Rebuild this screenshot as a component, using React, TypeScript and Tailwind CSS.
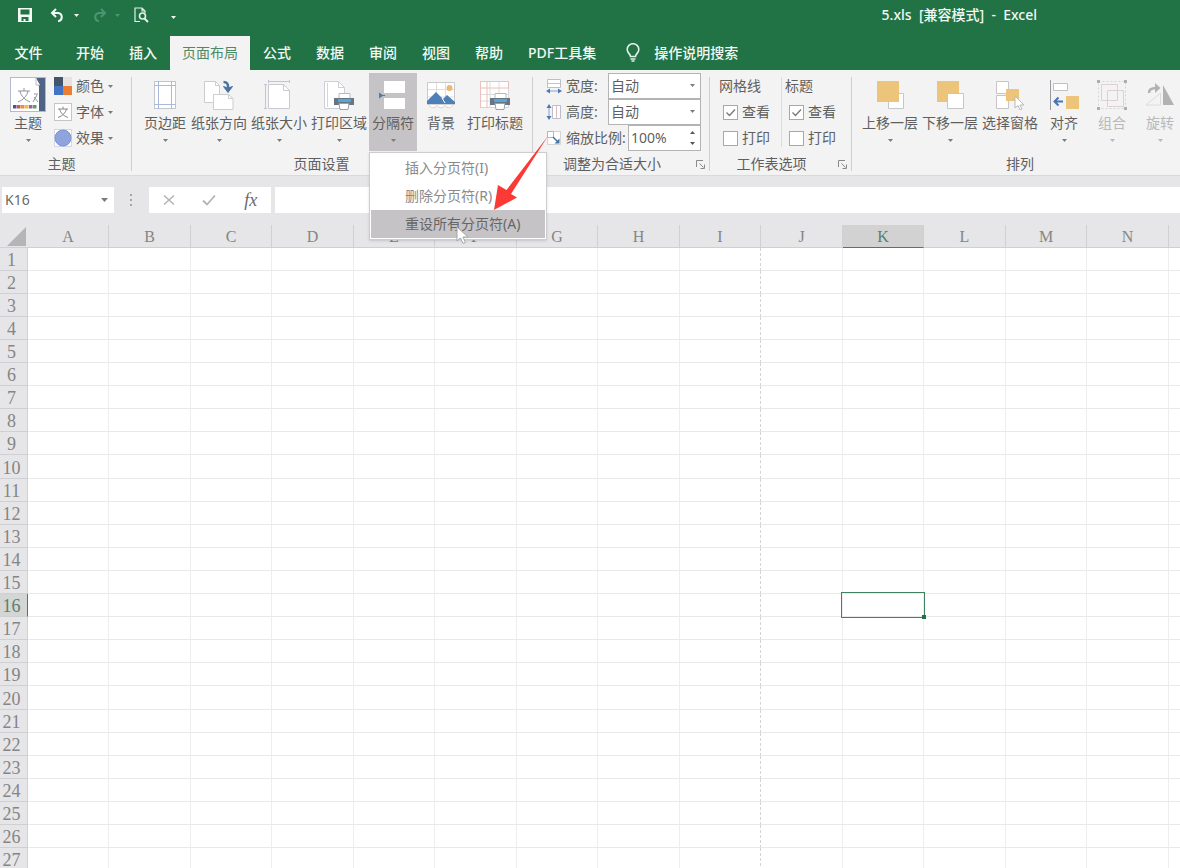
import { useState } from "react";
import type { ReactNode } from "react";

const COLUMNS = "ABCDEFGHIJKLMN".split("");
const ROWS = Array.from({ length: 28 }, (_, i) => i + 1);
const PAGE_BREAK_AFTER = "I";

/* ---------- Icons ---------- */

function Caret({ className = "" }: { className?: string }) {
  return (
    <svg viewBox="0 0 5 3" className={`w-[5px] h-[3px] ${className}`} fill="currentColor">
      <path d="M0 0h5L2.5 3z" />
    </svg>
  );
}

function IconSave() {
  return (
    <svg viewBox="0 0 14 14" className="w-3.5 h-3.5">
      <path fill="#f3faf5" fillRule="evenodd" d="M0 0h14v14H0zM2.5 1.5v5h9v-5zM3.5 9v4h2v-2h2v2h3V9z" />
    </svg>
  );
}

function IconUndo({ className = "" }: { className?: string }) {
  return (
    <svg viewBox="0 0 16 14" className={`w-4 h-3.5 ${className}`} fill="none" stroke="currentColor" strokeWidth="2">
      <path d="M6 1 2 5l4 4M2 5h6.500a4.200 4.200 0 0 1 0 8.200H8" />
    </svg>
  );
}

function IconPreview() {
  return (
    <svg viewBox="0 0 15 16" className="w-[15px] h-4" fill="none" stroke="#e4f1e8" strokeWidth="1.2">
      <path d="M6 14.500H1V1h7l3 3v2M8 1v3h3" />
      <circle cx="8.500" cy="9" r="3" strokeWidth="1.600" />
      <path d="m10.500 11.500 3.500 3.500" strokeWidth="2" />
    </svg>
  );
}

function IconBulb() {
  return (
    <svg viewBox="0 0 14 20" className="w-3.5 h-5" fill="none" stroke="#e4f1e8" strokeWidth="1.600">
      <path d="M4.500 13.500c0-2.500-3.300-3.500-3.300-7a5.800 5.800 0 0 1 11.600 0c0 3.500-3.300 4.500-3.300 7z" />
      <path d="M4.500 16h5M5.500 18h3" />
    </svg>
  );
}

function IconThemes() {
  return (
    <svg viewBox="0 0 36 36" className="w-9 h-9">
      <rect x=".5" y=".5" width="35" height="34" fill="#fff" stroke="#b5b8cc" />
      <path d="M26 1h9v33h-6V10z" fill="#4f6484" />
      <path d="M26 1v7h4" fill="#fff" stroke="#b9bcc8" />
      <path d="M8 14h12M14 11v3M18 14c-1 5-5 9-10 11M10 14c1 5 5 9 10 11" stroke="#8d92a0" fill="none" />
      <path d="M24 17h4M27 18l-4 7M24 20l4 5" stroke="#8d92a0" fill="none" />
      <path d="M3 28h3.500v3.500H3z" fill="#4455a5" />
      <path d="M7 28h3.500v3.500H7z" fill="#d9534a" />
      <path d="M11 28h3.500v3.500H11z" fill="#e88f30" />
      <path d="M15 28h3.500v3.500H15z" fill="#e5c043" />
      <path d="M19 28h3.500v3.500H19z" fill="#8a68b4" />
      <path d="M23 28h3.500v3.500H23z" fill="#62a052" />
    </svg>
  );
}

function IconColors() {
  return (
    <svg viewBox="0 0 18 18" className="w-[18px] h-[18px]">
      <path d="M0 0h9v9H0z" fill="#44546a" />
      <path d="M9 0h9v9H9z" fill="#e4e2e2" />
      <path d="M0 9h9v9H0z" fill="#4472c4" />
      <path d="M9 9h9v9H9z" fill="#ed7d31" />
    </svg>
  );
}

function IconFonts() {
  return (
    <svg viewBox="0 0 18 18" className="w-[18px] h-[18px]" fill="none">
      <rect x=".5" y=".5" width="17" height="17" fill="#fff" stroke="#c6c6c6" />
      <path d="M4 6h10M9 3.500V6M12.500 6c-1 4-4 7-8.500 8.500M5.500 6c1 4 4 7 8.500 8.500" stroke="#8a8a8a" />
    </svg>
  );
}

function IconEffects() {
  return (
    <svg viewBox="0 0 18 18" className="w-[18px] h-[18px]">
      <rect x=".5" y=".5" width="17" height="17" fill="#fff" stroke="#d3d6e6" />
      <circle cx="9" cy="9" r="8" fill="#8fa3dc" stroke="#7c92d2" />
    </svg>
  );
}

function IconMargins() {
  return (
    <svg viewBox="0 0 30 30" className="w-[30px] h-[30px]" fill="none">
      <rect x="4.500" y="1.500" width="21" height="27" fill="#fff" stroke="#c4c6ce" />
      <path d="M8.500 1v28M21.500 1v28M4 5.500h22M4 24.500h22" stroke="#a9b9dd" />
    </svg>
  );
}

function IconOrientation() {
  return (
    <svg viewBox="0 0 30 30" className="w-[30px] h-[30px]" fill="none">
      <path d="M.5 1.500h11l4 4v17H.5z" fill="#fff" stroke="#cdcdd1" />
      <path d="M11.500 1.500v4h4" stroke="#cdcdd1" />
      <path d="M9.500 14.500h15l4.500 4v11H9.500z" fill="#fff" stroke="#cdcdd1" />
      <path d="M24.500 14.500v4H29" stroke="#cdcdd1" />
      <path d="M19.500 2c3.500 0 5 2 4.500 6" stroke="#47759f" strokeWidth="2.500" />
      <path d="M19.500 6.500 24 8l4.500-1.500L24 12.500z" fill="#47759f" stroke="#47759f" />
    </svg>
  );
}

function IconSize() {
  return (
    <svg viewBox="0 0 30 30" className="w-[30px] h-[30px]" fill="none">
      <path d="M4.500 4.500h15l6 6v18h-21z" fill="#fff" stroke="#c8cad0" />
      <path d="M19.500 4.500v6h6" stroke="#c8cad0" />
      <path d="M4 1.500h22M1.500 4v25M4.500 0v3M25.500 0v3M0 4.500h3M0 28.500h3" stroke="#bfc5d3" />
    </svg>
  );
}

function Printer() {
  return (
    <g>
      <path d="M15 13.500h11v5H15z" fill="#fff" stroke="#b4bac4" />
      <path d="M10 18h20v7H10z" fill="#6b7482" />
      <path d="M14 19h13v3H14z" fill="#4fa9d4" />
      <path d="M15 23.500h10l-1 6h-8z" fill="#fff" stroke="#9aa1ab" />
    </g>
  );
}

function IconPrintArea() {
  return (
    <svg viewBox="0 0 30 30" className="w-[30px] h-[30px]" fill="none">
      <path d="M.5 1.500h14l6 6v21H.5z" fill="#fff" stroke="#cdcfd8" />
      <path d="M14.500 1.500v6h6" stroke="#cdcfd8" />
      <path d="M3.500 3v24" stroke="#cfd6ea" />
      <Printer />
    </svg>
  );
}

function IconBreaks() {
  return (
    <svg viewBox="0 0 30 30" className="w-[30px] h-[30px]">
      <path d="M6 1h21v12H6zM6 18h21v11H6z" fill="#fff" />
      <path d="M1 12.500 5.500 15.500 1 18.500z" fill="#4b7dac" />
      <path d="M5 15.500h2" stroke="#4b7dac" />
    </svg>
  );
}

function IconBackground() {
  return (
    <svg viewBox="0 0 30 30" className="w-[30px] h-[30px]" fill="none">
      <path d="M1.500 2.500h27v22h-27z" fill="#fff" stroke="#c9c9c9" />
      <path d="M10.500 3v21M19.500 3v21M2 9.500h26M2 17h26" stroke="#e0dede" />
      <circle cx="23.500" cy="8" r="3" fill="#e9b975" />
      <path d="M1 24v-3l9-9 7 7 4-4 8 7v2z" fill="#4d80b9" />
      <path d="m16 18 3 5" stroke="#fff" />
      <path d="M3 24.500h24c-1 4-6 4-8 1-2 3-6 3-8 0-2 3-7 3-8-1z" fill="#fff" stroke="#d2d2d2" />
    </svg>
  );
}

function IconPrintTitles() {
  return (
    <svg viewBox="0 0 30 30" className="w-[30px] h-[30px]" fill="none">
      <path d="M.5 1.500h28v26H.5z" fill="#fff" stroke="#d8d6d9" />
      <path d="M10 2v25M19 2v25M1 14.500h28M1 21h28" stroke="#dedcde" />
      <path d="M.5 28V1.500h28V8H.5M7 2v26" stroke="#ecc0bc" />
      <Printer />
    </svg>
  );
}

function IconFitWidth() {
  return (
    <svg viewBox="0 0 16 16" className="w-4 h-4" fill="none">
      <path d="M1.500 1.500h13v8h-13z" fill="#fff" stroke="#b9bfcb" />
      <path d="M2 5.500h12" stroke="#e2b8b8" />
      <path d="M3 13h10" stroke="#86a3cf" />
      <path d="M0 13l4-2.500v5zM16 13l-4-2.500v5z" fill="#4f76b4" />
    </svg>
  );
}

function IconFitHeight() {
  return (
    <svg viewBox="0 0 16 16" className="w-4 h-4" fill="none">
      <path d="M6.500 1.500h8v13h-8z" fill="#fff" stroke="#b9bfcb" />
      <path d="M10.500 2v12" stroke="#e2b8b8" />
      <path d="M3 3v10" stroke="#86a3cf" />
      <path d="M3 0 .5 4h5zM3 16l-2.500-4h5z" fill="#4f76b4" />
    </svg>
  );
}

function IconScale() {
  return (
    <svg viewBox="0 0 16 16" className="w-4 h-4" fill="none">
      <path d="M1.500 1.500h13v13h-13z" fill="#fff" stroke="#d4d4d4" />
      <path d="M1.500 1.500h6v6h-6z" stroke="#dda6a6" />
      <path d="m7 7 5 5" stroke="#4373a8" strokeWidth="1.500" />
      <path d="M13.500 13.500v-5l-5 5z" fill="#4373a8" />
    </svg>
  );
}

function IconBringForward() {
  return (
    <svg viewBox="0 0 30 30" className="w-[30px] h-[30px]">
      <path d="M13.500 13.500h15v15h-15z" fill="#fff" stroke="#c6c6ca" />
      <path d="M2 1h22v21H2z" fill="#ecc47a" />
    </svg>
  );
}

function IconSendBackward() {
  return (
    <svg viewBox="0 0 30 30" className="w-[30px] h-[30px]">
      <path d="M2 1h22v21H2z" fill="#ecc47a" />
      <path d="M12.500 13.500h16v15h-16z" fill="#fff" stroke="#c6c6ca" />
    </svg>
  );
}

function IconSelectionPane() {
  return (
    <svg viewBox="0 0 30 30" className="w-[30px] h-[30px]">
      <path d="M1.500 1.500h12v12h-12zM1.500 15.500h12v13h-12z" fill="#fff" stroke="#c6c6ca" />
      <path d="M11 9h13v12H11z" fill="#ecc47a" />
      <path d="M20 16v12l3-2.500 2 4.500 2-1-2-4h4z" fill="#fff" stroke="#b8b8be" />
    </svg>
  );
}

function IconAlign() {
  return (
    <svg viewBox="0 0 30 30" className="w-[30px] h-[30px]" fill="none">
      <path d="M1.500 0v30" stroke="#9a9aa0" />
      <path d="M4.500 3.500h14v7h-14z" fill="#fff" stroke="#c0c0c4" />
      <path d="M17 16h13v13H17z" fill="#ecc47a" />
      <path d="M14 21.500H6M9.500 17.500l-4 4 4 4" stroke="#4774b3" strokeWidth="2" />
    </svg>
  );
}

function IconGroup() {
  return (
    <svg viewBox="0 0 30 30" className="w-[30px] h-[30px]" fill="none">
      <path d="M1.500 1.500h27v27h-27z" stroke="#d8d2d7" strokeDasharray="2 2" />
      <path d="M4.500 4.500h16v16h-16zM10.500 10.500h16v16h-16z" stroke="#dccfd6" />
      <path d="M0 0h3v3H0zM27 0h3v3h-3zM0 27h3v3H0zM27 27h3v3h-3z" fill="#b0acb0" />
    </svg>
  );
}

function IconRotate() {
  return (
    <svg viewBox="0 0 30 30" className="w-[30px] h-[30px]" fill="none">
      <path d="M18 5v20h11z" fill="#b2b2b5" />
      <path d="M15.500 13v12H1z" stroke="#dcdcde" />
      <path d="M4 13c0-4 3-5 7-5" stroke="#b2b2b5" strokeWidth="2.500" />
      <path d="m10 3 5.500 5-5.500 5z" fill="#b2b2b5" />
    </svg>
  );
}

function IconLauncher() {
  return (
    <svg viewBox="0 0 9 9" className="w-[9px] h-[9px]" fill="none" stroke="#8a8a8a">
      <path d="M.5 7V.5H7M3.500 3.500l4 4M8.500 4.500v4h-4" />
    </svg>
  );
}

/* ---------- Ribbon pieces ---------- */

type BigButtonProps = {
  icon: ReactNode;
  label: string;
  wide?: boolean;
  menu?: boolean;
  active?: boolean;
  disabled?: boolean;
};

function BigButton({ icon, label, wide, menu = true, active, disabled }: BigButtonProps) {
  return (
    <button
      disabled={disabled}
      className={`flex h-[78px] shrink-0 flex-col items-center whitespace-nowrap ${
        wide ? "w-[60px]" : "w-12"
      } ${active ? "bg-[#c5c3c5]" : ""} ${disabled ? "text-[#b9b9b9]" : ""}`}
    >
      <span className="flex h-10 items-center pt-1">{icon}</span>
      <span className="h-5 leading-5">{label}</span>
      {menu && <Caret className={disabled ? "mt-1.5" : "mt-1.5 text-[#7c7c7c]"} />}
    </button>
  );
}

function SmallButton({ icon, label }: { icon: ReactNode; label: string }) {
  return (
    <button className="flex h-[26px] items-center gap-1">
      {icon}
      <span>{label}</span>
      <Caret className="text-[#7c7c7c]" />
    </button>
  );
}

type GroupProps = {
  label: string;
  launcher?: boolean;
  className?: string;
  children: ReactNode;
};

function Group({ label, launcher, className = "", children }: GroupProps) {
  return (
    <section aria-label={label} className={`flex flex-col ${className}`}>
      <div className="flex h-[78px]">{children}</div>
      <div className="flex h-[26px] items-center pt-0.5">
        <span className="flex-1 text-center">{label}</span>
        {launcher && (
          <button aria-label={`${label}设置`} className="flex w-[18px] justify-center">
            <IconLauncher />
          </button>
        )}
      </div>
    </section>
  );
}

function Separator() {
  return <div className="my-1 w-px shrink-0 bg-[#cfcfcf]" />;
}

function FitSelect({ id, icon, label }: { id: string; icon: ReactNode; label: string }) {
  return (
    <div className="flex h-[26px] items-center">
      {icon}
      <label htmlFor={id} className="ml-1 flex-1">
        {label}
      </label>
      <div className="relative">
        <select
          id={id}
          className="block h-[26px] w-[93px] appearance-none border border-[#b4b4b4] bg-white px-0.5 leading-5"
        >
          <option>自动</option>
          <option>1 页</option>
          <option>2 页</option>
        </select>
        <Caret className="pointer-events-none absolute right-1.5 top-[11px] text-[#7c7c7c]" />
      </div>
    </div>
  );
}

function CheckOption({ label, checked = false }: { label: string; checked?: boolean }) {
  const [on, setOn] = useState(checked);
  return (
    <label className="flex h-[26px] items-center gap-1 pl-1">
      <span className="relative flex">
        <input
          type="checkbox"
          checked={on}
          onChange={() => setOn(!on)}
          className="h-[15px] w-[15px] appearance-none border border-[#a8a8a8] bg-white"
        />
        {on && (
          <svg
            viewBox="0 0 15 15"
            className="pointer-events-none absolute inset-0 w-[15px] h-[15px]"
            fill="none"
            stroke="#777"
            strokeWidth="1.300"
          >
            <path d="m3.500 7.500 3 3 5.500-6" />
          </svg>
        )}
      </span>
      <span>{label}</span>
    </label>
  );
}

function BreaksMenu() {
  return (
    <div className="absolute left-0 top-[79px] z-10 w-[178px] border border-[#cdcdcd] bg-white p-px text-[#8a8a8a] shadow-sm">
      <button className="block h-7 w-full pl-[34px] text-left">插入分页符(I)</button>
      <button className="block h-7 w-full pl-[34px] text-left">删除分页符(R)</button>
      <button className="block h-7 w-full bg-[#c5c3c5] pl-[34px] text-left text-[#666]">
        重设所有分页符(A)
      </button>

      {/* Mouse pointer */}
      <svg viewBox="0 0 14 20" className="absolute left-[86px] top-[73px] h-5 w-3.5">
        <path d="M1 1v14l3.500-3 2.500 5.500 2.500-1L7 11h5z" fill="#fff" stroke="#a5a5a5" />
      </svg>

      {/* Red pointer arrow */}
      <svg viewBox="0 0 56 76" className="pointer-events-none absolute -top-[18px] left-[124px] h-[76px] w-14">
        <path d="M0 75 4 50l8.500 5L54 1 17 59l6 3.500z" fill="#fb3a36" />
      </svg>
    </div>
  );
}

/* ---------- Window sections ---------- */

const TABS = ["开始", "插入", "页面布局", "公式", "数据", "审阅", "视图", "帮助", "PDF工具集"];

function TitleBar() {
  return (
    <header className="flex h-9 items-center bg-[#217346] pb-1.5 text-[#f2f8f4]">
      <div className="flex items-center pl-[18px]">
        <button aria-label="保存">
          <IconSave />
        </button>
        <button aria-label="撤消" className="ml-[18px] flex items-center gap-2">
          <IconUndo />
          <Caret />
        </button>
        <button aria-label="恢复" className="ml-3 flex items-center gap-2 text-[#4f9470]">
          <IconUndo className="-scale-x-100" />
          <Caret />
        </button>
        <button aria-label="打印预览" className="ml-3.5">
          <IconPreview />
        </button>
        <button aria-label="自定义快速访问工具栏" className="ml-[22px] pt-1">
          <Caret />
        </button>
      </div>
      <h1 className="ml-auto mr-[143px] whitespace-pre font-medium">5.xls  [兼容模式]  -  Excel</h1>
    </header>
  );
}

function TabBar() {
  const [current, setCurrent] = useState("页面布局");
  return (
    <nav className="flex h-[34px] gap-px bg-[#217346] font-medium text-[#f2f8f4]">
      <button className="w-[63px] pr-1.5">文件</button>
      {TABS.map((tab) => (
        <button
          key={tab}
          onClick={() => setCurrent(tab)}
          className={`whitespace-nowrap px-3 ${
            tab === current ? "bg-[#f3f3f3] font-normal text-[#4b8a67]" : ""
          }`}
        >
          {tab}
        </button>
      ))}
      <button className="ml-[17px] flex items-center gap-3.5">
        <IconBulb />
        操作说明搜索
      </button>
    </nav>
  );
}

function Ribbon() {
  return (
    <div className="flex h-[106px] border-b border-[#dadada] bg-[#f3f3f3] pt-[3px] text-[#5f5f5f]">
      <Group label="主题" className="w-[131px] pl-1 pr-3">
        <BigButton icon={<IconThemes />} label="主题" />
        <div className="flex shrink-0 flex-col pl-0.5">
          <SmallButton icon={<IconColors />} label="颜色" />
          <SmallButton icon={<IconFonts />} label="字体" />
          <SmallButton icon={<IconEffects />} label="效果" />
        </div>
      </Group>
      <Separator />

      <Group label="页面设置" launcher className="w-[400px] pl-[9px] pr-3">
        <BigButton icon={<IconMargins />} label="页边距" />
        <BigButton icon={<IconOrientation />} label="纸张方向" wide />
        <BigButton icon={<IconSize />} label="纸张大小" wide />
        <BigButton icon={<IconPrintArea />} label="打印区域" wide />
        <div className="relative">
          <BigButton icon={<IconBreaks />} label="分隔符" active />
          <BreaksMenu />
        </div>
        <BigButton icon={<IconBackground />} label="背景" menu={false} />
        <BigButton icon={<IconPrintTitles />} label="打印标题" wide menu={false} />
      </Group>
      <Separator />

      <Group label="调整为合适大小" launcher className="w-[176px]">
        <div className="ml-[13px] w-[155px]">
          <FitSelect id="fit-width" icon={<IconFitWidth />} label="宽度:" />
          <FitSelect id="fit-height" icon={<IconFitHeight />} label="高度:" />
          <div className="flex h-[26px] items-center">
            <IconScale />
            <label htmlFor="fit-scale" className="ml-1 flex-1 whitespace-nowrap">
              缩放比例:
            </label>
            <div className="flex h-[26px] w-[73px] border border-[#b4b4b4] bg-white">
              <input id="fit-scale" defaultValue="100%" className="w-full min-w-0 pl-0.5 outline-none" />
              <div className="flex w-4 shrink-0 flex-col items-center justify-center gap-2 text-[#555]">
                <button aria-label="增大">
                  <Caret className="block rotate-180" />
                </button>
                <button aria-label="减小">
                  <Caret className="block" />
                </button>
              </div>
            </div>
          </div>
        </div>
      </Group>
      <Separator />

      <Group label="工作表选项" launcher className="w-[141px]">
        <fieldset className="w-[71px] pl-[9px]">
          <div className="flex h-[26px] items-center">网格线</div>
          <CheckOption label="查看" checked />
          <CheckOption label="打印" />
        </fieldset>
        <div className="my-1 w-px bg-[#dcdcdc]" />
        <fieldset className="pl-[3px]">
          <div className="flex h-[26px] items-center">标题</div>
          <CheckOption label="查看" checked />
          <CheckOption label="打印" />
        </fieldset>
      </Group>
      <Separator />

      <Group label="排列" className="min-w-0 flex-1 overflow-hidden pl-2">
        <BigButton icon={<IconBringForward />} label="上移一层" wide />
        <BigButton icon={<IconSendBackward />} label="下移一层" wide />
        <BigButton icon={<IconSelectionPane />} label="选择窗格" wide menu={false} />
        <BigButton icon={<IconAlign />} label="对齐" />
        <BigButton icon={<IconGroup />} label="组合" disabled />
        <BigButton icon={<IconRotate />} label="旋转" disabled />
      </Group>
    </div>
  );
}

function FormulaBar() {
  return (
    <div className="flex h-[49px] items-start bg-[#e6e6e8] pb-3 pl-0.5 pt-[11px] text-[#6a6a6a]">
      <div className="flex h-[26px] w-28 items-center bg-white pr-1.5">
        <input aria-label="名称框" defaultValue="K16" className="w-full min-w-0 pl-[3px] outline-none" />
        <svg viewBox="0 0 7 4" className="h-1 w-[7px] shrink-0" fill="#7a7a7a">
          <path d="M0 0h7L3.500 4z" />
        </svg>
      </div>
      <svg viewBox="0 0 3 12" className="mx-4 mt-[7px] h-3 w-[3px]" fill="#a5a5a5">
        <path d="M0 0h2v2H0zM0 5h2v2H0zM0 10h2v2H0z" />
      </svg>
      <div className="flex h-[26px] w-[122px] items-center justify-around bg-white">
        <button aria-label="取消">
          <svg viewBox="0 0 12 12" className="h-3 w-3" stroke="#b4b4b4" strokeWidth="1.500">
            <path d="m1 1.500 10 9M11 1.500l-10 9" />
          </svg>
        </button>
        <button aria-label="输入">
          <svg viewBox="0 0 14 12" className="h-3 w-3.5" fill="none" stroke="#b4b4b4" strokeWidth="1.800">
            <path d="m1 6.500 4 4 8-9" />
          </svg>
        </button>
        <button className="font-['Liberation_Serif',serif] text-[18px] italic leading-5">fx</button>
      </div>
      <input aria-label="编辑栏" className="ml-1 h-[26px] min-w-0 flex-1 bg-white px-2 outline-none" />
    </div>
  );
}

function Sheet() {
  const selected = { col: "K", row: 16 };
  return (
    <table className="w-full table-fixed border-separate border-spacing-0 font-['Liberation_Serif',serif] text-[#858585]">
      <colgroup>
        <col className="w-7" />
        {COLUMNS.map((col, i) => (
          <col key={col} className={i % 2 ? "w-[82px]" : "w-[81px]"} />
        ))}
        <col />
      </colgroup>
      <thead>
        <tr className="h-[23px] bg-[#e6e6e8]">
          <th className="border-b border-[#d0d0d2] p-0">
            <svg viewBox="0 0 19 19" className="ml-[7px] h-[19px] w-[19px]" fill="#b5b5b7">
              <path d="M19 0v19H0z" />
            </svg>
          </th>
          {COLUMNS.map((col) => (
            <th
              key={col}
              scope="col"
              className={`border-b border-r p-0 pt-0.5 text-[16px] font-normal leading-5 ${
                col === selected.col
                  ? "border-r-[#cfcfcf] border-b-[#3f8260] bg-[#d2d2d3] text-[#5c7f6c]"
                  : "border-[#d0d0d2]"
              }`}
            >
              {col}
            </th>
          ))}
          <th className="border-b border-[#d0d0d2] p-0" />
        </tr>
      </thead>
      <tbody>
        {ROWS.map((row) => (
          <tr key={row} className={row % 10 === 0 ? "h-6" : "h-[23px]"}>
            <th
              scope="row"
              className={`border-b border-r p-0 pr-1 pt-0.5 text-[18px] font-normal leading-5 ${
                row === selected.row
                  ? "border-b-[#d0d0d2] border-r-[#3f8260] bg-[#d3d6d4] text-[#5c7f6c]"
                  : "border-[#d0d0d2] bg-[#e6e6e8]"
              }`}
            >
              {row}
            </th>
            {COLUMNS.map((col) => (
              <td
                key={col}
                className={`relative border-b border-r border-b-[#e9e9e9] p-0 ${
                  col === PAGE_BREAK_AFTER ? "border-r-[#d4d4d4] [border-right-style:dashed]" : "border-r-[#eeeeee]"
                }`}
              >
                {col === selected.col && row === selected.row && (
                  <div className="absolute -inset-0.5 z-10 border border-[#3f8260]">
                    <span className="absolute -bottom-0.5 -right-0.5 h-1 w-1 bg-[#217346]" />
                  </div>
                )}
              </td>
            ))}
            <td className="border-b border-[#e9e9e9] p-0" />
          </tr>
        ))}
      </tbody>
    </table>
  );
}

export default function App() {
  return (
    <div className="h-screen overflow-hidden bg-white font-['Noto_Sans','Noto_Sans_CJK_SC',sans-serif] text-[14px] leading-5">
      <TitleBar />
      <TabBar />
      <Ribbon />
      <FormulaBar />
      <Sheet />
    </div>
  );
}
